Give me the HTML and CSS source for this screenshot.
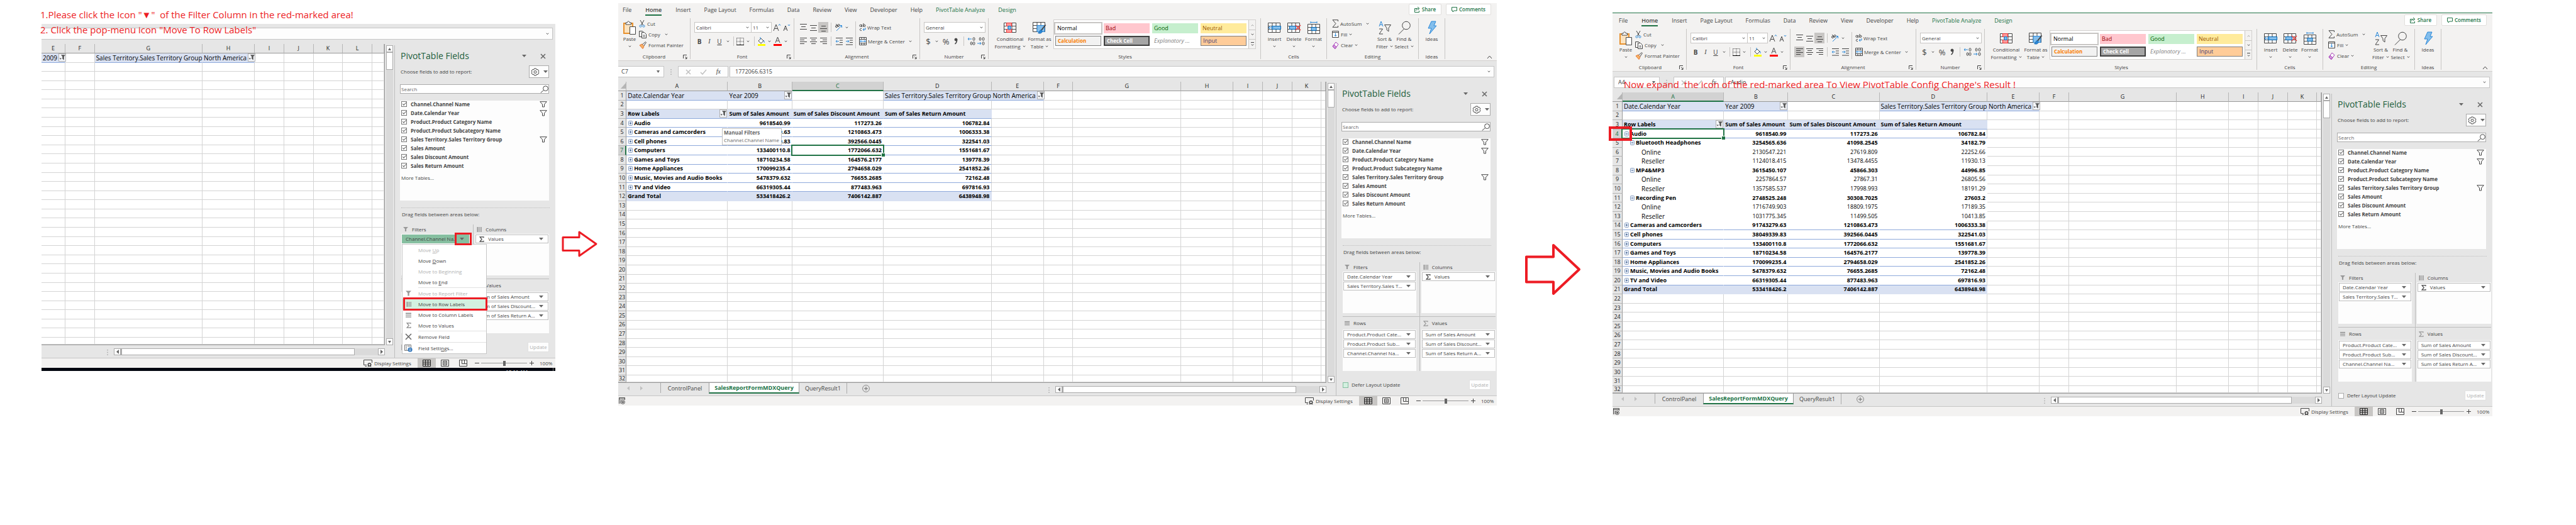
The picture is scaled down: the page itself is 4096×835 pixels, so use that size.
FILE: index.html
```
<!DOCTYPE html>
<html lang="en">
<head>
<meta charset="utf-8">
<title>Pivot table: move a filter to row labels</title>
<link rel="stylesheet" href="styles.css">
</head>
<body>
<main class="stage">
  <section class="step step-one">
    <div class="window" id="window-one"></div>
    <p class="note note-one">1.Please click the Icon "▼"&nbsp; of the Filter Column in the red-marked area!<br>2. Click the pop-menu icon "Move To Row Labels"</p>
  </section>
  <svg class="arrow arrow-one" viewBox="0 0 58 44" aria-hidden="true"><path d="M2 11.5h26V3l27 19-27 19v-8.5H2z"/></svg>
  <section class="step step-two">
    <div class="window" id="window-two"></div>
  </section>
  <svg class="arrow arrow-two" viewBox="0 0 89 83" aria-hidden="true"><path d="M2 21.500h43V3l41 38.500L45 80V61.500H2z"/></svg>
  <section class="step step-three">
    <div class="window window-topline" id="window-three"></div>
    <p class="note note-three">Now expand&nbsp; the icon of the red-marked area To View PivotTable Config Change's Result !</p>
  </section>
</main>
<script src="script.js"></script>
</body>
</html>
```
FILE: styles.css
```
* { box-sizing: border-box; }
body { margin: 0; background: #fff; color: #444; font-family: "Open Sans", "Noto Sans", sans-serif; font-size: 8px; line-height: 12px; }
button, input, select { font: inherit; color: inherit; margin: 0; padding: 0; border: 0; background: none; border-radius: 0; }
button { display: inline-flex; align-items: center; justify-content: center; white-space: nowrap; }
svg { display: block; flex: none; }
p { margin: 0; }

.stage { display: grid; grid-template-columns: 66fr 817fr 100fr 1397fr 184fr 1399fr 133fr; align-items: start; }
.step { position: relative; min-width: 0; }
.step-one { grid-column: 2; padding-top: 38px; }
.step-two { grid-column: 4; padding-top: 5px; }
.step-three { grid-column: 6; padding-top: 20px; }
.note { position: absolute; color: #ed1c24; font-size: 15px; line-height: 24px; white-space: nowrap; }
.note-one { left: -2px; top: 11px; }
.note-three { left: 18px; top: 122px; }
.arrow { fill: none; stroke: #ed1c24; stroke-linejoin: round; }
.arrow-one { grid-column: 3; width: 58px; margin: 366px 0 0 10px; stroke-width: 3; }
.arrow-two { grid-column: 5; width: 89px; margin: 387px 0 0 45px; stroke-width: 4; }

.window { background: #e6e6e6; }
.window-topline { border-top: 1px solid #217346; }
.window-topline .menubar { padding-top: 1px; height: 25px; padding-left: 3px; }
.window-topline .groups { padding-left: 3px; }
.window-topline .formula { padding-left: 2px; }

/* menu bar */
.ribbon { background: #f3f2f1; border-bottom: 1px solid #d2d0ce; }
.menubar { display: flex; justify-content: space-between; height: 24px; }
.menus { display: flex; gap: 21px; padding-left: 7px; }
.menu { height: 20px; padding-top: 2px; font-size: 9px; }
.menu-on { margin: 0 1px; font-weight: 600; border-bottom: 2px solid #217346; padding-top: 4px; }
.menu-tool { color: #217346; }
.share { display: flex; gap: 7px; padding: 1px 9px 0 0; }
.share button { height: 18px; padding: 0 8px; gap: 3px; background: #fff; border: 1px solid #e1dfdd; border-radius: 2px; color: #217346; font-weight: 600; }

/* ribbon groups */
.groups { display: flex; height: 67px; padding-bottom: 2px; }
.group { display: flex; flex-direction: column; padding-left: 6px; border-right: 1px solid #c8c6c4; }
.group-body { display: flex; flex: 1; }
.group-name { position: relative; height: 8px; line-height: 8px; text-align: center; margin-left: -6px; }
.launcher { position: absolute; right: 4px; top: 1px; }
.g-clipboard { width: 115px; } .g-font { width: 165px; } .g-align { width: 200px; } .g-number { width: 109px; }
.g-styles { width: 433px; padding-left: 8px; } .g-cells { width: 105px; } .g-edit { width: 146px; } .g-ideas { width: 42px; padding-left: 0; }
.g-ideas .group-name { margin-left: 0; }
.collapse { margin: auto 7px 0 auto; }
.tall { flex-direction: column; justify-content: flex-start; height: 53px; padding-top: 3px; }
.tall .glyph { height: 24px; display: grid; place-items: center; }
.tall .line { display: flex; align-items: center; gap: 3px; height: 12px; }
.w-paste { width: 24px; } .w-cf { width: 52px; } .w-ft { width: 42px; } .w-cell { width: 31px; } .w-sort { width: 31px; } .w-idea { width: 41px; }
.stack { display: grid; grid-template-rows: repeat(3, 1fr); height: 52px; padding-left: 3px; }
.stack button { justify-content: flex-start; gap: 3px; }
.stack-edit { width: 70px; padding-left: 2px; }
.rows { display: grid; grid-template-rows: 17px 17px; row-gap: 5px; padding-top: 6px; align-content: start; }
.row { display: flex; align-items: center; }
.row button { height: 17px; }
.row .pressed { background: #c8c6c4; }
.b10 { width: 10px; } .b12 { width: 12px; } .b13 { width: 13px; } .b14 { width: 14px; } .b16 { width: 16px; }
.ch { font-size: 10px; }
.ch-big { font-size: 13px; }
.strong { font-weight: 700; } .slant { font-style: italic; font-family: "Liberation Serif", serif; } .under { text-decoration: underline; }
.bar { width: 1px; height: 15px; background: #c8c6c4; margin: 0 4px; }
.bar-long { width: 1px; height: 43px; background: #c8c6c4; margin: 5px 5px 0 2px; }
.wide { gap: 2px; }
.combo { display: grid; align-items: center; height: 17px; background: #fff; border: 1px solid #c8c6c4; }
.combo select, .combo svg { grid-area: 1 / 1; }
.combo select { appearance: none; width: 100%; padding-left: 2px; outline: 0; }
.combo svg { justify-self: end; margin-right: 3px; pointer-events: none; }
.combo-font { width: 91px; } .combo-size { width: 32px; border-left: 0; } .combo-number { width: 98px; }

.gallery { display: flex; height: 47px; margin: 2px 0 0 1px; border: 1px solid #d2d0ce; background: #fff; }
.swatches { display: grid; grid-template-columns: repeat(4, 73px); grid-template-rows: 16px 16px; gap: 4px; padding: 5px 3px 0 2px; }
.swatches button { justify-content: flex-start; padding-left: 3px; font-size: 9px; }
.sw-normal { outline: 2px solid #c8c6c4; color: #000; }
.sw-bad { background: #ffc7ce; color: #9c0006; } .sw-good { background: #c6efce; color: #006100; } .sw-neutral { background: #ffeb9c; color: #9c5700; }
.swatches .sw-calc { background: #f2f2f2; color: #fa7d00; font-weight: 700; border: 1px solid #7f7f7f; font-size: 8px; }
.swatches .sw-check { background: #a5a5a5; color: #fff; font-weight: 700; border: 2px double #3f3f3f; font-size: 8px; }
.sw-expl { color: #7f7f7f; font-style: italic; } .sw-input { background: #ffcc99; color: #3f3f76; border: 1px solid #7f7f7f; }
.gallery-nav { display: grid; grid-template-rows: 1fr 1fr 1fr; width: 11px; border-left: 1px solid #c8c6c4; background: #f3f2f1; }
.gallery-nav button + button { border-top: 1px solid #c8c6c4; }

/* formula bar */
.formula { display: flex; padding: 8px 4px 0 0; height: 26px; }
.formula-bare { padding-top: 6px; height: 25px; padding-right: 4px; }
.field { display: flex; align-items: center; height: 18px; background: #fdfdfd; border: 1px solid #c6c6c6; }
.name-box { width: 73px; padding: 0 6px 0 5px; justify-content: space-between; border-left: 0; }
.window-topline .name-box { border-left: 1px solid #c6c6c6; padding-left: 6px; }
.name-box input { width: 40px; font-size: 9px; }
.grip { width: 22px; display: grid; place-items: center; }
.fx { width: 80px; justify-content: space-around; margin-right: 2px; padding: 0 4px; }
.formula-text { flex: 1; padding: 0 5px 0 8px; }
.formula-text input { flex: 1; min-width: 0; font-size: 9px; }
.formula-bare .formula-text { border-left: 0; height: 19px; }

/* workspace: sheet on the left, field list on the right */
.work { display: flex; }
.left { flex: 1; min-width: 0; display: flex; flex-direction: column; }
.sheet-row { display: flex; padding-top: 7px; }
.sheet { position: relative; flex: 1; min-width: 0; border: solid #999; border-width: 0 1px 1px 0; }
.cells { display: grid; height: 478px; grid-template-rows: 15px repeat(31, 20fr) 15fr; background: #fff; color: #000; font-size: 9px; line-height: 12px; overflow: hidden; }
.cells thead, .cells tbody, .cells tr { display: contents; }
.cells th, .cells td { display: flex; align-items: center; min-width: 0; min-height: 0; padding: 0; font-weight: 400; white-space: nowrap; border: solid #d4d4d4; border-width: 0 1px 1px 0; }
.cells th { justify-content: center; background: #e6e6e6; border-color: #b5b5b5; color: #222; }
.cells thead th { border-bottom-color: #999; }
.cells tbody th { border-right-color: #999; }
.cells thead .on, .cells tbody .on { background: #d2d2d2; color: #217346; }
.cells thead .on { border-bottom: 2px solid #217346; }
.cells tbody .on { border-right: 2px solid #217346; }
.cells .corner { justify-content: flex-end; }
.cells td { padding-left: 2px; gap: 2px; }
.cells .label { font-size: 10px; }
.cells .num { justify-content: flex-end; padding-right: 2px; }
.cells .bold { font-weight: 700; font-size: 9px; }
.cells .band { background: #d9e1f2; border-color: #d9e1f2; }
.cells .blue { border-bottom-color: #8ea9db; }
.cells .open { border-right-color: transparent; }
.cells .clear { border-color: transparent; }
.cells .open, .cells .blue:not(.band):first-of-type { padding-left: 3px; }
.cells .in1 { padding-left: 12px; }
.cells .in2 { padding-left: 30px; }
.cells .picked { position: relative; }
.picked::after { content: ""; position: absolute; inset: -2px; border: 2px solid #217346; }
.picked::before { content: ""; position: absolute; z-index: 1; right: -3px; bottom: -3px; width: 5px; height: 5px; background: #217346; border: solid #fff; border-width: 1px 0 0 1px; }
.drop { margin-left: auto; width: 12px; height: 13px; background: #f5f7fb; border: 1px solid #b0b0b0; }
.twist { width: 7px; height: 8px; }
.tip { position: absolute; left: 165px; top: 74px; width: 95px; height: 27px; padding-left: 2px; background: #fff; border: 1px solid #bebebe; color: #666; line-height: 12px; white-space: nowrap; }
.tip span { display: block; }
.mark { position: absolute; border: 3px solid #ed1c24; z-index: 3; pointer-events: none; }
.mark-row { left: -6px; top: 54px; width: 37px; height: 23px; border-width: 4px; }

.vscroll { display: flex; flex-direction: column; width: 11px; margin: 2px 2px 0; background: #dadada; }
.vscroll button, .hscroll button { background: #fff; border: 1px solid #ababab; width: 11px; height: 11px; }
.vscroll .thumb { height: 28px; }
.vscroll .end { margin-top: auto; }
.bottom { display: flex; height: 20px; padding-right: 15px; }
.sheet-tabs { display: flex; flex: 1; }
.nav { width: 68px; display: flex; align-items: center; gap: 17px; padding-left: 14px; border-right: 1px solid #ababab; height: 16px; }
.tab { height: 17px; font-size: 9px; width: 76px; }
.tab-on { width: 144px; background: #fff; color: #217346; font-weight: 700; border: solid #999; border-width: 0 1px; border-bottom: 2px solid #217346; }
.tab-last { border-right: 1px solid #ababab; }
.add { margin-left: 24px; height: 17px; }
.hscroll { display: flex; width: 431px; height: 11px; margin-top: 5px; background: #dadada; }
.hscroll .thumb { width: 372px; border-left-width: 2px; }
.hscroll .end { margin-left: auto; }
.split { margin: 7px 9px 0 0; height: 8px; }

/* field list */
.pane { position: relative; width: 256px; margin-top: 9px; border-left: 1px solid #bebebe; padding: 7px 10px 0 8px; display: flex; flex-direction: column; }
.pane-title { display: flex; align-items: center; height: 20px; padding: 0 5px 0 1px; }
.pane-title h2 { margin: 0 auto 0 0; font-size: 14px; font-weight: 400; line-height: 20px; color: #215e3b; }
.pane-title button + button { margin-left: 22px; }
.pane-ask { display: flex; align-items: center; justify-content: space-between; height: 20px; margin-top: 5px; padding-left: 1px; }
.tools { width: 32px; height: 20px; gap: 6px; background: #fdfdfd; border: 1px solid #ababab; }
.search { display: flex; align-items: center; margin-top: 10px; height: 15px; background: #fff; border: 1px solid #ababab; padding-left: 1px; }
.search input { flex: 1; min-width: 0; }
.search input::placeholder { color: #666; opacity: 1; }
.list { display: flex; flex-direction: column; gap: 3px; height: 159px; margin-top: 11px; padding: 0 2px; background: #fdfdfd; }
.item { display: flex; align-items: center; height: 11px; font-weight: 700; gap: 6px; }
.item svg { margin-left: auto; margin-right: 1px; }
.item input, .defer input { appearance: none; width: 9px; height: 9px; border: 1px solid #777; background: #fff; display: grid; place-items: center; }
.item input:checked::after { content: ""; width: 5px; height: 2px; border: solid #666; border-width: 0 0 1px 1px; transform: rotate(-45deg); margin-bottom: 2px; }
.more { margin-top: 5px; align-self: flex-start; color: #444; text-decoration: none; }
.dots { margin: 11px -1px 0 2px; border-top: 1px dotted #bebebe; }
.hint { margin: 4px 0 0 3px; height: 12px; }
.areas { display: grid; grid-template-columns: 117fr 118fr; margin: 10px 0 0 2px; }
.area { padding: 0 5px 5px 0; }
.area:nth-child(even) { border-left: 1px solid #bebebe; padding: 0 0 5px 2px; }
.area:nth-child(n+3) { border-top: 1px solid #bebebe; padding-bottom: 0; }
.area-name { display: flex; align-items: center; gap: 6px; height: 15px; padding-left: 3px; }
.area:nth-child(n+3) .area-name { height: 20px; }
.area-name svg { width: 8px; }
.box { display: grid; align-content: start; gap: 1px; height: 66px; padding: 1px; background: #fdfdfd; }
.chip { position: relative; height: 14px; width: 100%; justify-content: flex-start; gap: 6px; padding: 0 7px 0 5px; background: #fff; border: 1px solid #bebebe; }
.chip .arrow-down { margin-left: auto; }
.chip-on { background: #86bfa0; border-color: #86bfa0; }
.mark-chip { right: -5px; top: -4px; width: 27px; height: 20px; }
.pane-foot { display: flex; align-items: center; justify-content: space-between; margin-top: 14px; height: 16px; padding-left: 2px; }
.defer { display: flex; align-items: center; gap: 5px; }
.defer input { border-color: #ababab; }
.defer .mint { background: #d3f0e0; border-color: #86bfa0; }
.update { width: 34px; height: 16px; background: #fdfdfd; border: 1px solid #e1e1e1; color: #b1b1b1; }
.popup { position: absolute; z-index: 2; left: 11px; top: 316px; width: 135px; background: #fff; border: 1px solid #c6c6c6; }
.popup button { display: flex; position: relative; width: 100%; height: 17px; justify-content: flex-start; }
.popup i { width: 25px; display: grid; place-items: center; padding-right: 6px; }
.popup hr { margin: 0 0 0 25px; border: 0; border-top: 1px solid #e1e1e1; }
.popup .off { color: #b1b1b1; }
.popup .hot { background: #d3f0e0; }
.mark-item { left: 1px; right: -2px; top: -2px; height: 21px; }

/* status bar */
.status { display: flex; align-items: center; height: 16px; background: #f3f2f1; border-top: 1px solid #c6c6c6; }
.status-gap { flex: 1; padding-left: 1px; }
.display { width: 86px; gap: 3px; justify-content: flex-start; }
.view { width: 29px; height: 15px; }
.view-on { background: #c8c6c4; }
.zoom-btn { width: 14px; height: 15px; }
.zoom { appearance: none; width: 73px; height: 15px; background: linear-gradient(#999, #999) center / 100% 1px no-repeat; }
.zoom::-webkit-slider-thumb { appearance: none; width: 4px; height: 8px; background: #666; }
.percent { width: 31px; padding-left: 6px; }
.taskbar { display: flex; justify-content: flex-end; height: 5px; background: #02060f; color: #fff; overflow: hidden; }
.taskbar time { border-right: 1px solid #777; padding: 1px 40px 0 0; margin-right: 3px; line-height: 10px; }
```
FILE: script.js
```
const svg = (w, h, body) => `<svg width="${w}" height="${h}" viewBox="0 0 ${w} ${h}" fill="none" stroke="#444" aria-hidden="true">${body}</svg>`;
const chev = svg(5, 4, '<path d="M.8.8l1.700 1.700L4.200.8"/>');
const tri = {
  down: '<svg class="arrow-down" width="7" height="4" viewBox="0 0 7 4" fill="#666"><path d="M0 0h7L3.500 4z"/></svg>',
  up: '<svg width="5" height="4" viewBox="0 0 5 4" fill="#666"><path d="M0 4h5L2.500 0z"/></svg>',
  small: '<svg width="5" height="4" viewBox="0 0 5 4" fill="#666"><path d="M0 0h5L2.500 4z"/></svg>',
  left: c => `<svg width="4" height="7" viewBox="0 0 4 7" fill="${c}"><path d="M4 0v7L0 3.500z"/></svg>`,
  right: c => `<svg width="4" height="7" viewBox="0 0 4 7" fill="${c}"><path d="M0 0v7l4-3.500z"/></svg>`
};
const lines = (...l) => svg(11, 12, l.map(([x1, x2, y]) => `<path d="M${x1} ${y}.5H${x2}"/>`).join(''));
const gridBox = '<path d="M.5.5h19v15H.5zM.5 5.500h19M.5 10.500h19M7 .5v15M13 .5v15" fill="#fff"/>';
const I = {
  paste: svg(22, 23, '<path d="M2 4h14v16H2z" stroke="#e8912d" stroke-width="2" fill="#fbe3c0"/><path d="M5 6V3h2.500C7.500.2 11 .2 11 3h2.500v3z" fill="#fff"/><path d="M11.500 9.500h9v12h-9z" fill="#fff"/>'),
  cut: svg(10, 12, '<path d="M2 0l4.500 8M8 0L3.500 8"/><circle cx="2.500" cy="9.500" r="1.600" stroke="#2b88d8"/><circle cx="7.500" cy="9.500" r="1.600" stroke="#2b88d8"/>'),
  copy: svg(12, 12, '<path d="M4 9.500H.5v-9h5L7 2"/><path d="M4.500 2.500h4l3 3v6h-7zM6.500 7h3M6.500 9h3" fill="#fff"/>'),
  painter: svg(12, 12, '<path d="M1 6l4-2 3 4-2 3.500z" fill="#f4b26a" stroke="#e8762d"/><path d="M5.500 4.500l2-1.500 3-2.500 1 1L9 5 8 7"/>'),
  growA: svg(13, 13, '<path d="M1 12L5 2l4 10M2.500 8.500h5"/><path d="M9 3.500l1.500-2 1.500 2" stroke="#2b88d8"/>'),
  shrinkA: svg(12, 13, '<path d="M1 12l3-8 3 8M2.200 9h3.600"/><path d="M8 2l1.500 2L11 2" stroke="#2b88d8"/>'),
  borders: svg(12, 12, '<path d="M.5.5h11v10M.5.5v11M6 0v12M0 6h12" stroke-dasharray="1 1"/><path d="M0 11.500h12" stroke="#000"/>'),
  fill: svg(13, 14, '<path d="M2 6l4-4 4 4-4 4z" fill="#fff"/><path d="M5 0v4M10 5c2 2 1 4 1 4" stroke="#2b88d8"/><path d="M1 12.500h12" stroke="#ff0" stroke-width="3"/>'),
  fontA: svg(13, 14, '<path d="M3 9L6.500 0 10 9M4.500 6h4"/><path d="M0 12.500h13" stroke="#f00" stroke-width="3"/>'),
  comma: svg(6, 12, '<circle cx="3" cy="3" r="2" fill="#444"/><path d="M4.500 3c.3 3-.8 5-3 7" stroke-width="1.500"/>'),
  top: lines([0, 11, 0], [2, 9, 4], [0, 11, 8]), mid: lines([0, 11, 2], [2, 9, 6], [0, 11, 10]), bot: lines([2, 9, 3], [0, 11, 7], [2, 9, 11]),
  left: lines([0, 11, 0], [0, 7, 3], [0, 11, 6], [0, 7, 9]), center: lines([0, 11, 0], [2, 9, 3], [0, 11, 6], [2, 9, 9]), right: lines([0, 11, 0], [4, 11, 3], [0, 11, 6], [4, 11, 9]),
  orient: svg(13, 13, '<circle cx="3" cy="5" r="1.500"/><path d="M2 1l5 5"/><circle cx="6.500" cy="3" r="1.500"/><path d="M3 12l8-8M8 3.500h3.500V7" stroke="#2b88d8"/>'),
  outdent: svg(11, 12, '<path d="M0 .5h11M6 4h5M6 7.500h5M0 11h11"/><path d="M5 5.700H0M2 3.700l-2 2 2 2" stroke="#2b88d8"/>'),
  indent: svg(11, 12, '<path d="M0 .5h11M6 4h5M6 7.500h5M0 11h11"/><path d="M0 5.700h5M3 3.700l2 2-2 2" stroke="#2b88d8"/>'),
  wrap: svg(11, 13, '<circle cx="2.500" cy="3.800" r="1.600"/><path d="M4.500 2v4M7 0v6"/><circle cx="8.500" cy="3.800" r="1.500"/><path d="M4 8.500c-3-1-4 4 0 3"/><path d="M10 7v3H6M8 8l-2 2 2 2" stroke="#2b88d8"/>'),
  merge: svg(12, 13, '<path d="M.5.5h11v12H.5zM4 .5v3M8 .5v3M4 9.500v3M8 9.500v3M.5 3.500h11M.5 9.500h11" fill="#fff"/><path d="M1.500 6.500h9M3.500 4.800L1.800 6.500l1.700 1.700M8.500 4.800l1.700 1.700-1.700 1.700" stroke="#2b88d8"/>'),
  dec: d => svg(13, 13, `<path d="${d ? 'M1 10h6M5 8l2 2-2 2' : 'M7 3H1M3 1L1 3l2 2'}" stroke="#2b88d8"/><ellipse cx="10.500" cy="${d ? 10 : 3}" rx="1.500" ry="2.400"/><ellipse cx="${d ? 5.5 : 6.5}" cy="${d ? 3 : 10}" rx="1.300" ry="2.400"/><ellipse cx="10.500" cy="${d ? 3 : 10}" rx="1.500" ry="2.400"/>`),
  cf: svg(20, 17, gridBox + '<path d="M4.500.5h8v5h-8zM4.500 10.500h8v5h-8z" fill="#ff9a9a" stroke="#e33"/><path d="M7 5.500h4v5H7z" fill="#83beec" stroke="#0078d4"/>'),
  ft: svg(22, 19, gridBox + '<path d="M7 5.500h12v10H7z" fill="#83beec" stroke="#2b88d8"/><path d="M20.500 4.500l-7 9" stroke-width="2"/><path d="M13.500 12.500c-3 0-2 4-5 5 4 1.500 7 0 6.500-3.500z" fill="#2b88d8" stroke="#1f6fb5"/>'),
  ins: svg(22, 17, gridBox + '<path d="M6.500 5.500h14v5h-14z" fill="#83beec" stroke="#0062ad"/><path d="M9 8H1M4 5L1 8l3 3" stroke="#2b88d8"/>'),
  del: svg(22, 17, gridBox + '<path d="M3.500 5.500h10v5h-10z" fill="#83beec" stroke="#0062ad"/><path d="M13 4l8 8M21 4l-8 8" stroke="#e84444" stroke-width="1.500"/>'),
  fmt: svg(20, 21, `<g transform="translate(0 4)">${gridBox}</g><path d="M6 9.500h8v5H6z" fill="#83beec" stroke="#0062ad"/><path d="M5 1.500h10M5 0v3M15 0v3" stroke="#2b88d8"/>`),
  sum: svg(10, 13, '<path d="M9.500 3V.7H1L6 6.500l-5 5.800h8.500V10"/>'),
  filldown: svg(11, 11, '<path d="M.5.5h10v10H.5zM.5 2.500h10" fill="#fff"/><path d="M5.500 3.500v5M3.500 6.700l2 2 2-2" stroke="#2b88d8"/>'),
  clear: svg(11, 13, '<path d="M1 8l5-7 4 3.500-5 7z" fill="#fff" stroke="#a239b5"/><path d="M1 8l2-2.700 4 3.400-2 2.800z" fill="#d59ade" stroke="#a239b5"/>'),
  sort: svg(21, 22, '<path d="M2 9l3-8 3 8M3 6.500h4" stroke="#2b88d8"/><path d="M2 13h5.500L2 21h6"/><path d="M10.500 6.500h10L17 11.500V17l-3-2.500v-3z"/>'),
  find: svg(20, 22, '<circle cx="13" cy="7.500" r="6.300"/><path d="M9.500 13L1 21.500"/>'),
  bolt: svg(16, 22, '<path d="M7 1h7l-3 7h4L4 21l3-9H2z" fill="#83beec" stroke="#2b88d8"/>'),
  launch: svg(7, 7, '<path d="M6 .5H.5V6M3 3l3 3M6 3.500V6.500H3.500"/>'),
  share: svg(9, 10, '<path d="M4 3.500H.5v6h7V7M2.500 7c0-3 2-3.500 4-3.500M5 1l3 2.500L5 6" stroke="#217346"/>'),
  comment: svg(9, 9, '<path d="M.5.5h8v5.500H4L2 8V6H.5z" stroke="#217346"/>'),
  collapse: svg(9, 6, '<path d="M1 5l3.500-4L8 5"/>'),
  funnelCell: svg(10, 11, '<path d="M3.500 1.500h6L7.500 4v5l-2-1.500V4z" fill="#555" stroke="#555" stroke-width=".6"/><path d="M.5 6.500h3.500L2.200 8.700z" fill="#555" stroke="none"/>'),
  funnel: svg(12, 10, '<path d="M.7.7h10.600L7.500 5v4H4.500V5z"/>'),
  funnelFull: svg(9, 9, '<path d="M0 .5h9L5.700 4v4.500H3.300V4z" fill="#999" stroke="none"/>'),
  cols: svg(8, 8, '<path d="M1.500 0v8" stroke="#999" stroke-width="2"/><path d="M4 0v8M5.800 0v8M7.500 0v8" stroke="#888" stroke-width=".8"/>'),
  rowsI: svg(9, 8, '<path d="M0 1.500h9" stroke="#999" stroke-width="2"/><path d="M0 4h9M0 5.800h9M0 7.500h9" stroke="#888" stroke-width=".8"/>'),
  sigma: c => svg(8, 9, `<path d="M7 2.200V.8H1l3.200 3.700L1 8.200h6V6.800" stroke="${c}" stroke-width="1.200"/>`),
  gear: svg(14, 13, '<path d="M5.500 1h3l.7 1.800 2-.3 1.800 2.600L11.800 6.500l1.200 1.400-1.800 2.600-2-.3L8.500 12h-3l-.7-1.800-2 .3L1 7.900l1.200-1.400L1 5.100l1.800-2.600 2 .3z"/><circle cx="7" cy="6.500" r="2"/>'),
  glass: svg(13, 12, '<circle cx="8.500" cy="4.700" r="3.900"/><path d="M5.500 7.500L.7 11.500"/>'),
  x: (s, c) => svg(s, s, `<path d="M1 1l${s - 2} ${s - 2}M${s - 1} 1L1 ${s - 1}" stroke="${c}" stroke-width="1.500"/>`),
  info: svg(13, 12, '<path d="M.5.5h10v9H.5z" stroke="#777"/><path d="M2 2.500h2M5 2.500h4M2 5h2M2 7.500h2" stroke="#999" stroke-width="1.500"/><circle cx="9" cy="8.200" r="3.600" fill="#3f7fbf" stroke="none"/><path d="M9 7.500v2.700M9 5.700v1" stroke="#fff"/>'),
  macro: svg(10, 11, '<path d="M.5 10V.5h9V4M.5 2.500h9M2 5h2M2 7h1.500M2 9h1.500"/><circle cx="6.500" cy="7.500" r="2.900"/><circle cx="6.500" cy="7.500" r="1" fill="#444"/>'),
  display: svg(14, 12, '<path d="M5 8.500H.5v-8h13V5M2.500 10.500H5"/><circle cx="9.500" cy="8" r="2.200" stroke-width="1.600"/><path d="M7 11.500l1-2M12 11.500l-1-2"/>'),
  vGrid: svg(13, 11, '<path d="M.5.5h12v10H.5zM.5 4h12M.5 7h12M4.500.5v10M8.500.5v10" stroke="#222"/>'),
  vPage: svg(13, 11, '<path d="M.5.5h12v10H.5zM3.500 2.500h6v6h-6zM4.500 4.500h4M4.500 6.500h4"/>'),
  vBreak: svg(13, 11, '<path d="M.5.5h12v10H.5zM4.500.5v6h4v-6M8.500 6.500h4"/>'),
  minus: svg(7, 7, '<path d="M0 3.500h7"/>'), plus: svg(7, 7, '<path d="M0 3.500h7M3.500 0v7"/>'),
  addTab: svg(12, 12, '<circle cx="6" cy="6" r="5.400" stroke="#888"/><path d="M3 6h6M6 3v6" stroke="#666"/>'),
  dots: svg(2, 9, '<path d="M1 0v9" stroke="#aaa" stroke-dasharray="1.500 2.200" stroke-width="1.500"/>')
};

const btn = (cls, body, label = '') => `<button type="button" class="${cls}"${label ? ` aria-label="${label}"` : ''}>${body}</button>`;
const tall = (cls, icon, a, b = '') => btn('tall ' + cls, `<span class="glyph">${icon}</span><span class="line">${a}</span><span class="line">${b}</span>`);
const group = (cls, name, body, launcher = false) => `<div class="group ${cls}"><div class="group-body">${body}</div><div class="group-name">${name}${launcher ? `<span class="launcher">${I.launch}</span>` : ''}</div></div>`;
const combo = (cls, value, label) => `<label class="combo ${cls}"><select aria-label="${label}"><option>${value}</option></select>${chev}</label>`;
const bar = '<span class="bar"></span>';

function ribbon(leftAligned) {
  const menus = ['File', 'Home', 'Insert', 'Page Layout', 'Formulas', 'Data', 'Review', 'View', 'Developer', 'Help', 'PivotTable Analyze', 'Design'];
  return `<header class="ribbon">
  <div class="menubar"><nav class="menus">${menus.map((m, i) => btn('menu' + (i === 1 ? ' menu-on' : '') + (i > 9 ? ' menu-tool' : ''), m)).join('')}</nav>
  <div class="share">${btn('', I.share + 'Share')}${btn('', I.comment + 'Comments')}</div></div>
  <div class="groups">
  ${group('g-clipboard', 'Clipboard', tall('w-paste', I.paste, 'Paste', chev) + `<div class="stack">${btn('', I.cut + 'Cut')}${btn('', I.copy + 'Copy &nbsp;' + chev)}${btn('', I.painter + 'Format Painter')}</div>`, true)}
  ${group('g-font', 'Font', `<div class="rows"><div class="row">${combo('combo-font', 'Calibri', 'Font')}${combo('combo-size', '11', 'Font size')}${btn('b16', I.growA, 'Grow font')}${btn('b16', I.shrinkA, 'Shrink font')}</div>
   <div class="row">${btn('b16 ch strong', 'B')}${btn('b16 ch slant', 'I')}${btn('b16 ch under', 'U')}${btn('b10', chev, 'Underline style')}${bar}${btn('b12', I.borders, 'Borders')}${btn('b12', chev, 'Border style')}${bar}${btn('b13', I.fill, 'Fill colour')}${btn('b12', chev, 'More fills')}${btn('b14', I.fontA, 'Font colour')}${btn('b12', chev, 'More font colours')}</div></div>`, true)}
  ${group('g-align', 'Alignment', `<div class="rows"><div class="row">${btn('b16', I.top, 'Top')}${btn('b16', I.mid, 'Middle')}${btn('b16 pressed', I.bot, 'Bottom')}${bar}${btn('b14', I.orient, 'Orientation')}${btn('b12', chev, 'Orientation options')}</div>
   <div class="row">${btn('b16' + (leftAligned ? ' pressed' : ''), I.left, 'Left')}${btn('b16', I.center, 'Centre')}${btn('b16', I.right, 'Right')}${bar}${btn('b16', I.outdent, 'Outdent')}${btn('b16', I.indent, 'Indent')}</div></div><span class="bar-long"></span>
   <div class="rows"><div class="row">${btn('wide', I.wrap + 'Wrap Text')}</div><div class="row">${btn('wide', I.merge + 'Merge &amp; Center &nbsp;' + chev)}</div></div>`, true)}
  ${group('g-number', 'Number', `<div class="rows"><div class="row">${combo('combo-number', 'General', 'Number format')}</div>
   <div class="row">${btn('b14 ch-big', '$')}${btn('b13', chev, 'Currency')}${btn('b16 ch-big', '%')}${btn('b16', I.comma, 'Comma style')}${bar}${btn('b14', I.dec(0), 'More decimals')}${btn('b16', I.dec(1), 'Fewer decimals')}</div></div>`, true)}
  ${group('g-styles', 'Styles', tall('w-cf', I.cf, 'Conditional', 'Formatting' + chev) + tall('w-ft', I.ft, 'Format as', 'Table' + chev) +
   `<div class="gallery"><div class="swatches">${[['normal', 'Normal'], ['bad', 'Bad'], ['good', 'Good'], ['neutral', 'Neutral'], ['calc', 'Calculation'], ['check', 'Check Cell'], ['expl', 'Explanatory ...'], ['input', 'Input']].map(([c, t]) => btn('sw-' + c, t)).join('')}</div>
   <div class="gallery-nav">${btn('', svg(5, 4, '<path d="M.8 3.200l1.700-1.700 1.700 1.700" stroke="#999"/>'), 'Scroll up')}${btn('', chev, 'Scroll down')}${btn('', svg(5, 7, '<path d="M0 .5h5M.8 3.500l1.700 1.700 1.700-1.700"/>'), 'More styles')}</div></div>`)}
  ${group('g-cells', 'Cells', tall('w-cell', I.ins, 'Insert', chev) + tall('w-cell', I.del, 'Delete', chev) + tall('w-cell', I.fmt, 'Format', chev))}
  ${group('g-edit', 'Editing', `<div class="stack stack-edit">${btn('', I.sum + 'AutoSum &nbsp;' + chev)}${btn('', I.filldown + 'Fill' + chev)}${btn('', I.clear + 'Clear' + chev)}</div>` + tall('w-sort', I.sort, 'Sort &amp;', 'Filter' + chev) + tall('w-sort', I.find, 'Find &amp;', 'Select' + chev))}
  ${group('g-ideas', 'Ideas', tall('w-idea', I.bolt, 'Ideas'))}
  <button type="button" class="collapse" aria-label="Collapse ribbon">${I.collapse}</button>
  </div></header>`;
}

function formulaBar(name, value) {
  return `<div class="formula"><div class="field name-box"><input aria-label="Name box" value="${name}">${tri.small}</div><span class="grip">${I.dots}</span>
  <div class="field fx">${I.x(9, '#c0c0c0')}${svg(11, 9, '<path d="M1 5l3 3 6-7" stroke="#c0c0c0" stroke-width="1.500"/>')}<span class="ch slant">fx</span></div>
  <div class="field formula-text"><input aria-label="Formula" value="${value}">${chev}</div></div>`;
}

const twist = open => `<svg class="twist" viewBox="0 0 7 8" fill="#e8eef8" stroke="#8aa0c0"><rect x=".5" y=".5" width="6" height="7" rx="1"/><path d="M2 4h3${open ? '' : 'M3.500 2.500v3'}" stroke="#3f5f8f"/></svg>`;
const drop = `<button type="button" class="drop" aria-label="Filter">${I.funnelCell}</button>`;

/* A sheet: cols = [letter, relative width]; data = map of row number to its cells. */
function sheet({ cols, rowHead, picked, data, extra = '' }) {
  const head = (rowHead ? `<th class="corner">${svg(9, 10, '<path d="M9 0v9H1z" fill="#b5b5b5" stroke="none"/>')}</th>` : '') +
    cols.map(([l]) => `<th class="${picked && l === picked[0] ? 'on' : ''}">${l}</th>`).join('');
  let body = '';
  for (let r = 1; r <= 32; r++) {
    body += '<tr>' + (rowHead ? `<th class="${picked && r === picked[1] ? 'on' : ''}">${r}</th>` : '');
    for (const [l] of cols) {
      const cell = (data[r] && data[r][l]) || ['', ''];
      const sel = picked && l === picked[0] && r === picked[1] ? ' picked' : '';
      body += `<td class="${cell[1]}${sel}">${cell[0]}</td>`;
    }
    body += '</tr>';
  }
  const tracks = (rowHead ? rowHead + 'fr ' : '') + cols.map(c => `minmax(0, ${c[1]}fr)`).join(' ');
  return `<div class="sheet"><table class="cells" style="grid-template-columns:${tracks}"><thead><tr>${head}</tr></thead><tbody>${body}</tbody></table>${extra}</div>`;
}

const columns = [['A', 221], ['B', 140], ['C', 199], ['D', 235], ['E', 114], ['F', 64], ['G', 235], ['H', 114], ['I', 64], ['J', 64], ['K', 64], ['', 9]];
const filterRow = { A: ['Date.Calendar Year', 'band blue label'], B: ['Year 2009' + drop, 'band blue label'], D: ['Sales Territory.Sales Territory Group', 'band blue label'], E: ['North America' + drop, 'band blue label'] };
const titleRow = { A: ['Row Labels' + drop, 'band blue bold'], B: ['Sum of Sales Amount', 'band blue bold'], C: ['Sum of Sales Discount Amount', 'band blue bold'], D: ['Sum of Sales Return Amount', 'band blue bold'] };
const totals = [
  ['Cameras and camcorders', '91743279.63', '1210863.473', '1006333.38'], ['Cell phones', '38049339.83', '392566.0445', '322541.03'],
  ['Computers', '133400110.8', '1772066.632', '1551681.67'], ['Games and Toys', '18710234.58', '164576.2177', '139778.39'],
  ['Home Appliances', '170099235.4', '2794658.029', '2541852.26'], ['Music, Movies and Audio Books', '5478379.632', '76655.2685', '72162.48'],
  ['TV and Video', '66319305.44', '877483.963', '697816.93']];
const audio = ['Audio', '9618540.99', '117273.26', '106782.84'];
const audioParts = [
  [1, 'Bluetooth Headphones', '3254565.636', '41098.2545', '34182.79'], [2, 'Online', '2130547.221', '27619.809', '22252.66'], [2, 'Reseller', '1124018.415', '13478.4455', '11930.13'],
  [1, 'MP4&amp;MP3', '3615450.107', '45866.303', '44996.85'], [2, 'Online', '2257864.57', '27867.31', '26805.56'], [2, 'Reseller', '1357585.537', '17998.993', '18191.29'],
  [1, 'Recording Pen', '2748525.248', '30308.7025', '27603.2'], [2, 'Online', '1716749.903', '18809.1975', '17189.35'], [2, 'Reseller', '1031775.345', '11499.505', '10413.85']];
const grand = { A: ['Grand Total', 'band bold'], B: ['533418426.2', 'band bold num'], C: ['7406142.887', 'band bold num'], D: ['6438948.98', 'band bold num'] };
const totalRow = ([n, b, c, d], open) => ({ A: [twist(open) + n, 'bold open blue'], B: [b, 'bold num open blue'], C: [c, 'bold num open blue'], D: [d, 'bold num blue'] });
const partRow = ([lvl, n, b, c, d]) => {
  const w = lvl === 1 ? 'bold ' : '';
  return { A: [(lvl === 1 ? twist(true) : '') + n, `${w || 'label '}clear in${lvl}`], B: [b, w + 'num clear'], C: [c, w + 'num clear'], D: [d, w + 'num clear'] };
};

const dataTwo = { 1: filterRow, 3: titleRow, 12: grand };
[audio, ...totals].forEach((t, i) => { dataTwo[4 + i] = totalRow(t, false); });
const dataThree = { 1: filterRow, 3: titleRow, 4: totalRow(audio, true), 21: grand };
audioParts.forEach((p, i) => { dataThree[5 + i] = partRow(p); });
totals.forEach((t, i) => { dataThree[14 + i] = totalRow(t, false); });

const vscroll = `<div class="vscroll">${btn('', tri.up, 'Up')}${btn('thumb', '', 'Scroll')}${btn('end', tri.small, 'Down')}</div>`;
const hscroll = `<span class="split">${I.dots}</span><div class="hscroll">${btn('', tri.left('#666'), 'Left')}${btn('thumb', '', 'Scroll')}${btn('end', tri.right('#666'), 'Right')}</div>`;
const tabs = `<div class="nav">${tri.left('#c0c0c0')}${tri.right('#c0c0c0')}</div>${btn('tab', 'ControlPanel')}${btn('tab tab-on', 'SalesReportFormMDXQuery')}${btn('tab tab-last', 'QueryResult1')}${btn('add', I.addTab, 'New sheet')}`;

const chip = (t, icon = '') => btn('chip', icon + t + tri.down);
const area = (icon, name, chips) => `<div class="area"><div class="area-name">${icon}${name}</div><div class="box">${chips}</div></div>`;

function pane(menu, mint) {
  const fields = [['Channel.Channel Name', 1], ['Date.Calendar Year', 1], ['Product.Product Category Name'], ['Product.Product Subcategory Name'], ['Sales Territory.Sales Territory Group', 1], ['Sales Amount'], ['Sales Discount Amount'], ['Sales Return Amount']];
  const filters = menu ? btn('chip chip-on', 'Channel.Channel Na..' + tri.down + '<span class="mark mark-chip"></span>') : chip('Date.Calendar Year') + chip('Sales Territory.Sales T...');
  return `<aside class="pane">
  <div class="pane-title"><h2>PivotTable Fields</h2>${btn('', tri.down, 'Options')}${btn('', I.x(9, '#666'), 'Close')}</div>
  <div class="pane-ask">Choose fields to add to report:${btn('tools', I.gear + tri.down, 'Tools')}</div>
  <div class="search"><input type="search" placeholder="Search" aria-label="Search">${I.glass}</div>
  <div class="list">${fields.map(([f, on]) => `<label class="item"><input type="checkbox" checked>${f}${on ? I.funnel : ''}</label>`).join('')}<a class="more" href="#">More Tables...</a></div>
  <div class="dots"></div><p class="hint">Drag fields between areas below:</p>
  <div class="areas">${area(I.funnelFull, 'Filters', filters)}${area(I.cols, 'Columns', chip('Values', I.sigma('#444')))}
  ${menu ? area('', '', '') : area(I.rowsI, 'Rows', chip('Product.Product Cate...') + chip('Product.Product Sub...') + chip('Channel.Channel Na...'))}${area(I.sigma('#999'), 'Values', chip('Sum of Sales Amount') + chip('Sum of Sales Discount...') + chip('Sum of Sales Return A...'))}</div>
  <div class="pane-foot"><label class="defer"><input type="checkbox"${mint ? ' class="mint"' : ''} aria-label="Defer Layout Update">${menu ? '' : 'Defer Layout Update'}</label>${btn('update', 'Update')}</div>${menu ? popup() : ''}</aside>`;
}

function popup() {
  const item = (t, icon = '', cls = '') => btn(cls, `<i>${icon}</i><span>${t}</span>${cls === 'hot' ? '<span class="mark mark-item"></span>' : ''}`);
  return `<div class="popup">${item('Move <u>U</u>p', '', 'off')}${item('Move <u>D</u>own')}${item('Move to Be<u>g</u>inning', '', 'off')}${item('Move to <u>E</u>nd')}<hr>
  ${item('Move to Report Filter', I.funnelFull, 'off')}${item('Move to Row Labels', I.cols, 'hot')}${item('Move to Column Labels', I.rowsI)}${item('Move to Values', I.sigma('#888'))}<hr>${item('Remove Field', I.x(11, '#666'))}<hr>${item('Field Setti<u>n</u>gs...', I.info)}</div>`;
}

const status = macro => `<footer class="status"><span class="status-gap">${macro ? I.macro : ''}</span>${btn('display', I.display + 'Display Settings')}${btn('view view-on', I.vGrid, 'Normal')}${btn('view', I.vPage, 'Page layout')}${btn('view', I.vBreak, 'Page breaks')}
  ${btn('zoom-btn', I.minus, 'Zoom out')}<input class="zoom" type="range" aria-label="Zoom">${btn('zoom-btn', I.plus, 'Zoom in')}<span class="percent">100%</span></footer>`;

const work = (sheetHtml, tabHtml, paneHtml) => `<div class="work"><div class="left"><div class="sheet-row">${sheetHtml}${vscroll}</div><div class="bottom"><div class="sheet-tabs">${tabHtml}</div>${hscroll}</div></div>${paneHtml}</div>`;

document.getElementById('window-one').innerHTML =
  `<div class="formula formula-bare"><div class="field formula-text"><input aria-label="Formula" value="">${chev}</div></div>` +
  work(sheet({
    cols: [['E', 52], ['F', 64], ['G', 235], ['H', 114], ['I', 64], ['J', 64], ['K', 64], ['L', 64], ['', 26]],
    data: { 1: { E: ['2009' + drop, 'band blue label'], G: filterRow.D, H: filterRow.E } }
  }), '', pane(true, false)) + status(false) + '<div class="taskbar"><time>10:11 AM</time></div>';

document.getElementById('window-two').innerHTML = ribbon(false) + formulaBar('C7', '1772066.6315') +
  work(sheet({ cols: columns, rowHead: 18, picked: ['C', 7], data: dataTwo, extra: '<div class="tip"><b>Manual Filters</b><span>Channel.Channel Name</span></div>' }), tabs, pane(false, true)) + status(true);

document.getElementById('window-three').innerHTML = ribbon(true) + formulaBar('A4', 'Audio') +
  work(sheet({ cols: columns, rowHead: 22, picked: ['A', 4], data: dataThree, extra: '<span class="mark mark-row"></span>' }), tabs, pane(false, false)) + status(true);
```
